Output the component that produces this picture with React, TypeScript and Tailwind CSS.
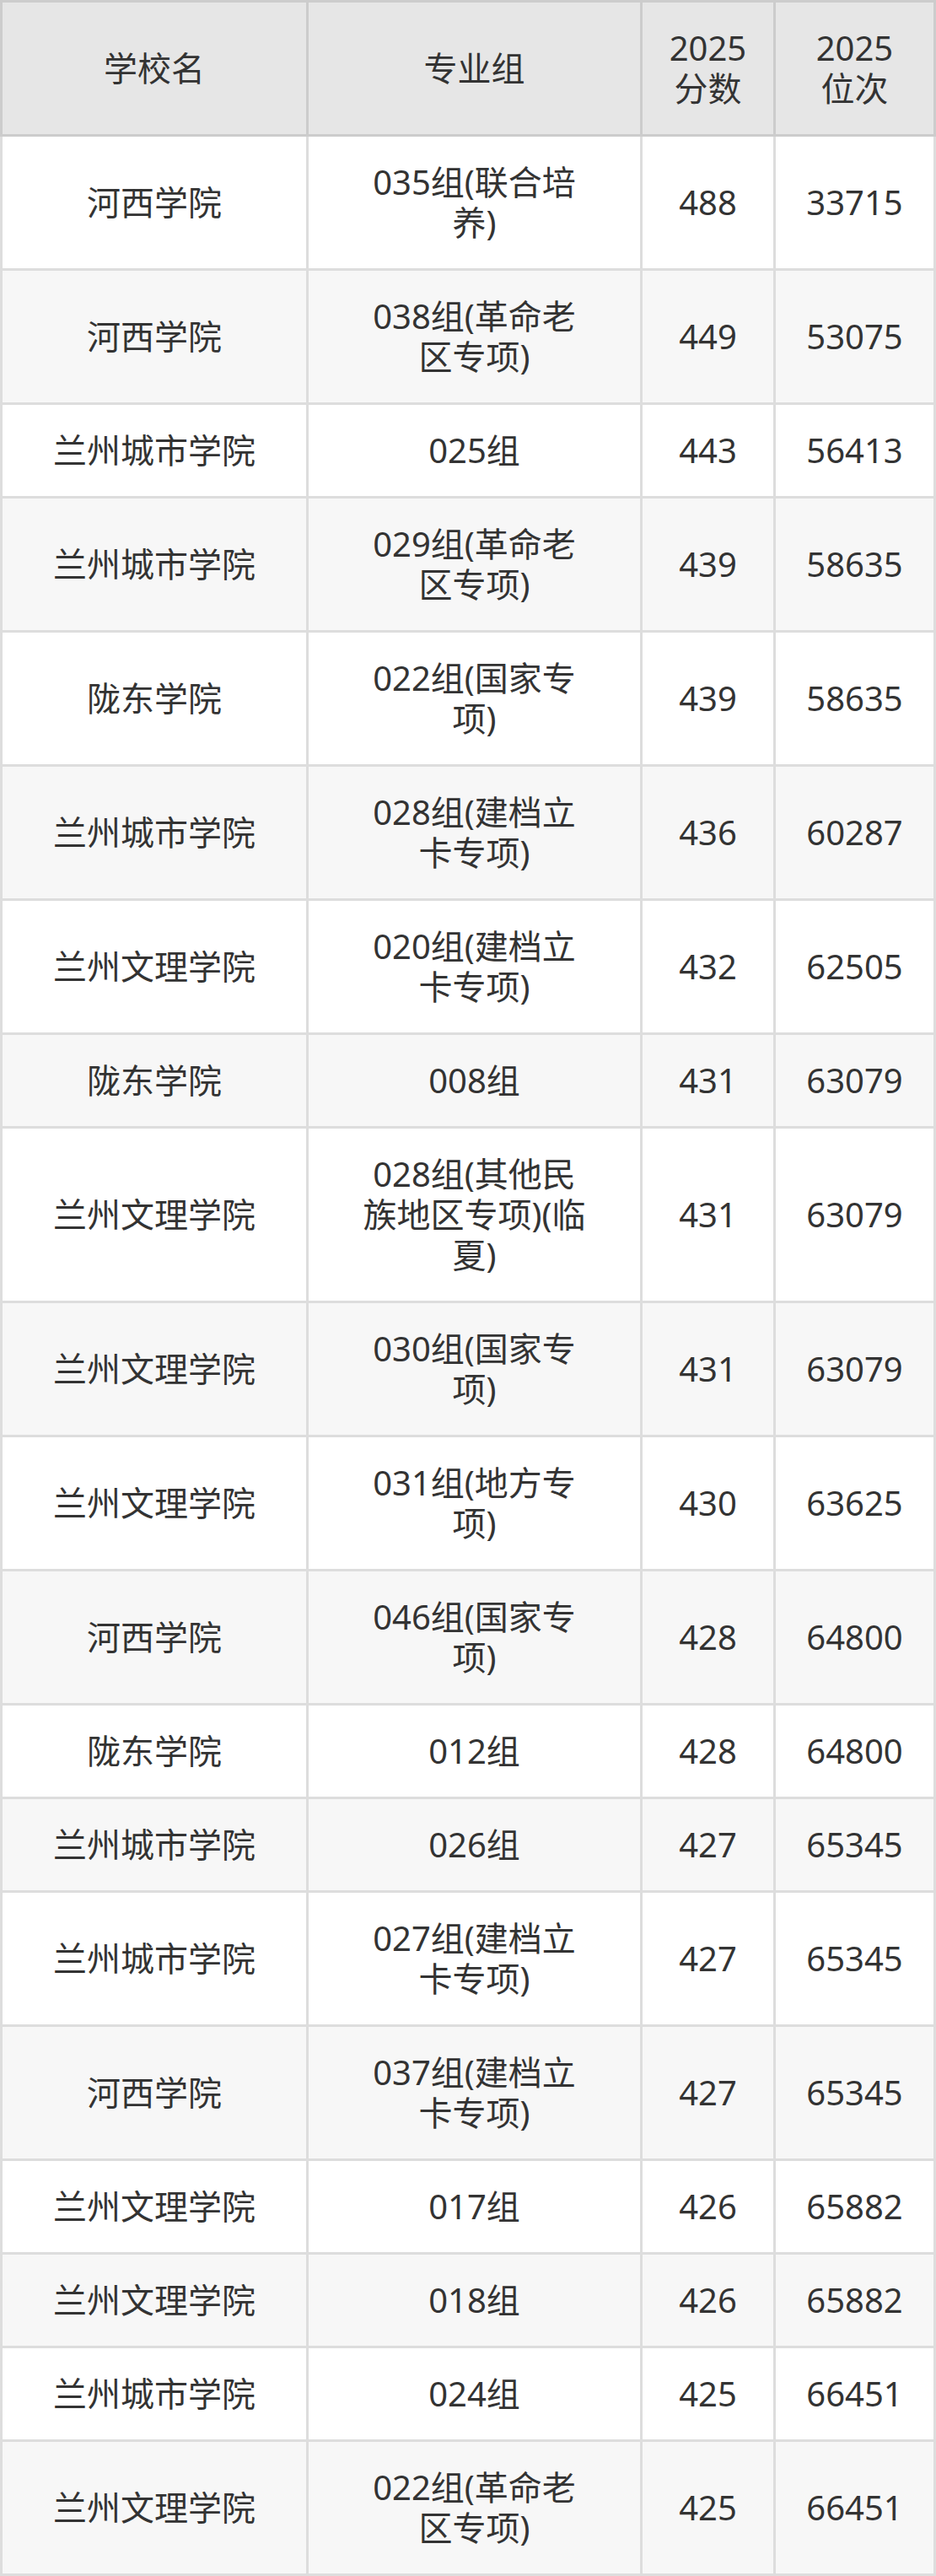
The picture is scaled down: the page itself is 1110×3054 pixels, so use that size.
type Row = { school: string; group: string[]; score: string; rank: string };

const rows: Row[] = [
  { school: '河西学院', group: ['035组(联合培', '养)'], score: '488', rank: '33715' },
  { school: '河西学院', group: ['038组(革命老', '区专项)'], score: '449', rank: '53075' },
  { school: '兰州城市学院', group: ['025组'], score: '443', rank: '56413' },
  { school: '兰州城市学院', group: ['029组(革命老', '区专项)'], score: '439', rank: '58635' },
  { school: '陇东学院', group: ['022组(国家专', '项)'], score: '439', rank: '58635' },
  { school: '兰州城市学院', group: ['028组(建档立', '卡专项)'], score: '436', rank: '60287' },
  { school: '兰州文理学院', group: ['020组(建档立', '卡专项)'], score: '432', rank: '62505' },
  { school: '陇东学院', group: ['008组'], score: '431', rank: '63079' },
  { school: '兰州文理学院', group: ['028组(其他民', '族地区专项)(临', '夏)'], score: '431', rank: '63079' },
  { school: '兰州文理学院', group: ['030组(国家专', '项)'], score: '431', rank: '63079' },
  { school: '兰州文理学院', group: ['031组(地方专', '项)'], score: '430', rank: '63625' },
  { school: '河西学院', group: ['046组(国家专', '项)'], score: '428', rank: '64800' },
  { school: '陇东学院', group: ['012组'], score: '428', rank: '64800' },
  { school: '兰州城市学院', group: ['026组'], score: '427', rank: '65345' },
  { school: '兰州城市学院', group: ['027组(建档立', '卡专项)'], score: '427', rank: '65345' },
  { school: '河西学院', group: ['037组(建档立', '卡专项)'], score: '427', rank: '65345' },
  { school: '兰州文理学院', group: ['017组'], score: '426', rank: '65882' },
  { school: '兰州文理学院', group: ['018组'], score: '426', rank: '65882' },
  { school: '兰州城市学院', group: ['024组'], score: '425', rank: '66451' },
  { school: '兰州文理学院', group: ['022组(革命老', '区专项)'], score: '425', rank: '66451' },
];

const cell = 'border-[3px] border-[#dddddd] px-2 py-[30px] text-center align-middle';
const head = 'border-[3px] border-[#cccccc] px-2 py-[30px] text-center align-middle font-normal';

function Lines({ lines }: { lines: string[] }) {
  return (
    <>
      {lines.map((l, i) => (
        <div key={i} className="whitespace-nowrap">
          {l}
        </div>
      ))}
    </>
  );
}

export default function App() {
  return (
    <div
      className="w-[1110px] bg-white text-[#333333] text-[40px] leading-[48px]"
      style={{ fontFamily: '"Noto Sans", "Noto Sans CJK SC", sans-serif' }}
    >
      <table className="w-full table-fixed border-collapse border-[3px] border-[#cccccc]">
        <colgroup>
          <col className="w-[363px]" />
          <col className="w-[396px]" />
          <col className="w-[158px]" />
          <col className="w-[190px]" />
        </colgroup>
        <thead>
          <tr className="bg-[#e6e6e6]">
            <th className={head}>学校名</th>
            <th className={head}>专业组</th>
            <th className={head}>
              <Lines lines={['2025', '分数']} />
            </th>
            <th className={head}>
              <Lines lines={['2025', '位次']} />
            </th>
          </tr>
        </thead>
        <tbody>
          {rows.map((r, i) => (
            <tr key={i} className={i % 2 === 0 ? 'bg-white' : 'bg-[#f7f7f7]'}>
              <td className={cell}>{r.school}</td>
              <td className={cell}>
                <Lines lines={r.group} />
              </td>
              <td className={cell}>{r.score}</td>
              <td className={cell}>{r.rank}</td>
            </tr>
          ))}
        </tbody>
      </table>
    </div>
  );
}
